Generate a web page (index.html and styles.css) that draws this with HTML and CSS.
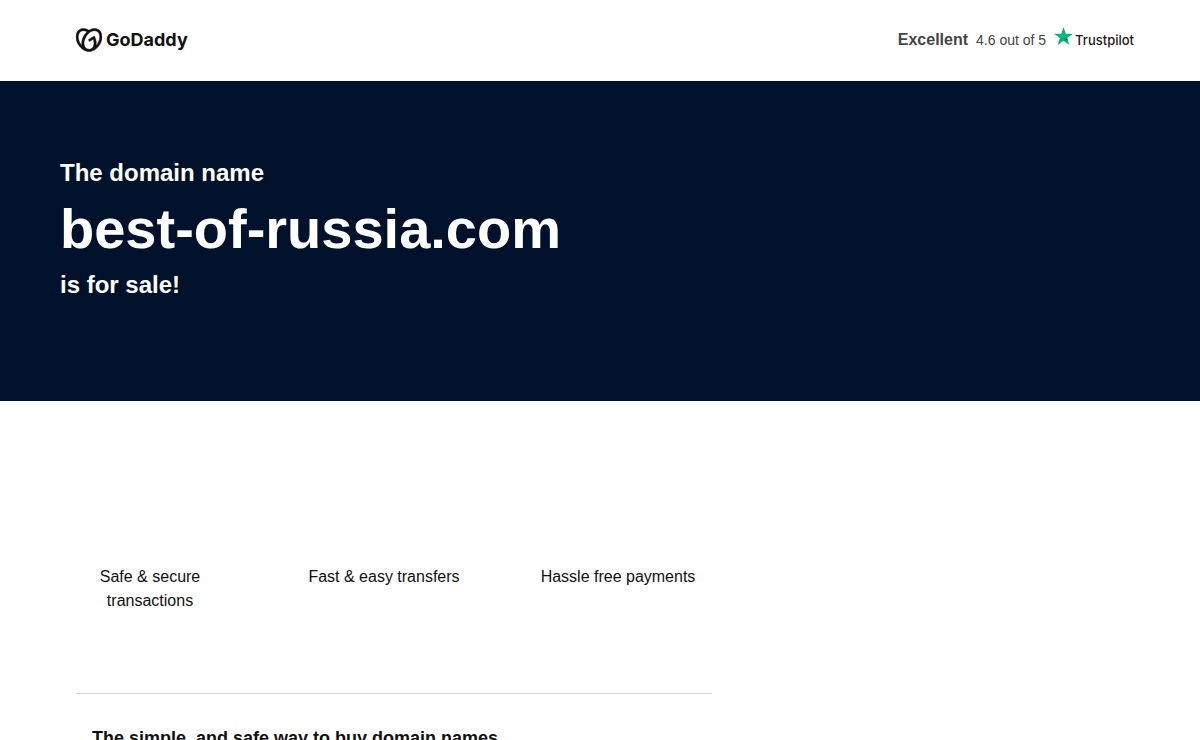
FILE: index.html
```html
<!DOCTYPE html>
<html lang="en">
<head>
    <meta charset="utf-8">
    <meta name="viewport" content="width=device-width, initial-scale=1">
    <title>best-of-russia.com is for sale</title>
    <link rel="stylesheet" href="styles.css">
</head>
<body>
    <header class="header">
        <a class="logo" href="#">
            <svg class="logo-mark" viewBox="0 1 24 22" aria-hidden="true">
                <path d="M20.702 2.29c-2.494-1.554-5.778-1.187-8.706.654C9.076 1.104 5.79.736 3.3 2.29c-3.941 2.463-4.42 8.806-1.07 14.167 2.47 3.954 6.333 6.269 9.77 6.226 3.439.043 7.301-2.273 9.771-6.226 3.347-5.361 2.872-11.704-1.069-14.167zM4.042 15.328a12.838 12.838 0 01-1.546-3.541 10.12 10.12 0 01-.336-3.338c.15-1.98.956-3.524 2.27-4.345 1.315-.822 3.052-.87 4.903-.137.281.113.556.24.825.382A15.11 15.11 0 007.5 7.54c-2.035 3.255-2.655 6.878-1.945 9.765a13.247 13.247 0 01-1.514-1.98zm17.465-3.541a12.866 12.866 0 01-1.547 3.54 13.25 13.25 0 01-1.513 1.984c.635-2.589.203-5.76-1.353-8.734a.39.39 0 00-.563-.153l-4.852 3.032a.397.397 0 00-.126.546l.712 1.139a.395.395 0 00.547.126l3.145-1.965c.101.306.203.606.28.916.296 1.086.41 2.214.335 3.337-.15 1.982-.956 3.525-2.27 4.347a4.437 4.437 0 01-2.25.65h-.101a4.432 4.432 0 01-2.25-.65c-1.314-.822-2.121-2.365-2.27-4.347-.074-1.123.039-2.251.335-3.337a13.212 13.212 0 014.05-6.482 10.148 10.148 0 012.849-1.765c1.845-.733 3.586-.685 4.9.137 1.316.822 2.122 2.365 2.271 4.345a10.146 10.146 0 01-.334 3.338z"/>
            </svg>
            <span class="logo-name">GoDaddy</span>
        </a>
        <div class="rating">
            <strong class="rating-label">Excellent</strong>
            <span class="rating-score">4.6 out of 5</span>
            <a class="trustpilot" href="#">
                <svg class="trustpilot-star" viewBox="0 0 20 19" aria-hidden="true">
                    <path fill="#00b67a" d="M20 7.25h-7.64L10 0 7.64 7.25H0l6.18 4.48L3.82 19 10 14.51 16.18 19l-2.36-7.27z"/>
                    <path fill="#005128" d="M14.35 13.37l-.53-1.64L10 14.51z"/>
                </svg>
                <span class="trustpilot-name">Trustpilot</span>
            </a>
        </div>
    </header>

    <section class="hero">
        <p class="hero-text">The domain name</p>
        <h1 class="domain">best-of-russia.com</h1>
        <p class="hero-text">is for sale!</p>
    </section>

    <main class="content">
        <ul class="features">
            <li>Safe &amp; secure transactions</li>
            <li>Fast &amp; easy transfers</li>
            <li>Hassle free payments</li>
        </ul>
        <section class="about">
            <h2 class="about-title">The simple, and safe way to buy domain names</h2>
        </section>
    </main>
</body>
</html>
```
FILE: styles.css
```css
* {
    box-sizing: border-box;
}

body {
    margin: 0;
    background: #fff;
    color: #111;
    font-family: "Liberation Sans", Arial, Helvetica, sans-serif;
    font-size: 16px;
    line-height: 24px;
}

a {
    color: inherit;
    text-decoration: none;
}

.header {
    display: flex;
    align-items: center;
    justify-content: space-between;
    min-height: 81px;
    padding: 0 66px 2px 76px;
}

.logo {
    display: flex;
    align-items: center;
    gap: 4px;
}

.logo-mark {
    width: 26px;
    height: 24px;
    fill: #111;
    stroke: #111;
    stroke-width: 0.4;
}

.logo-name {
    font-family: Inter, "Liberation Sans", sans-serif;
    font-size: 18px;
    font-weight: 700;
}

.rating {
    display: flex;
    align-items: baseline;
    gap: 8px;
    color: #444;
}

.rating-score {
    font-size: 14px;
}

.trustpilot {
    display: flex;
    align-items: baseline;
    gap: 2px;
    color: #191919;
}

.trustpilot-star {
    width: 19px;
    height: 18px;
}

.trustpilot-name {
    font-family: Inter, "Liberation Sans", sans-serif;
    font-size: 13px;
    font-weight: 500;
}

.hero {
    min-height: 320px;
    padding: 76px 60px;
    background: #00122b;
    color: #fff;
}

.hero-text {
    margin: 0;
    font-size: 24px;
    font-weight: 700;
    line-height: 32px;
}

.domain {
    margin: 6px 0;
    font-size: 56px;
    line-height: 68px;
}

.content {
    max-width: 832px;
    padding: 164px 120px 0 76px;
}

.features {
    display: grid;
    grid-template-columns: repeat(3, 160px);
    gap: 74px;
    margin: 0 -6px;
    padding: 0 0 80px;
    list-style: none;
    text-align: center;
}

.about {
    padding: 32px 16px;
    border-top: 1px solid #d4d4d4;
}

.about-title {
    margin: 0;
    font-size: 18px;
    line-height: 24px;
}
```
